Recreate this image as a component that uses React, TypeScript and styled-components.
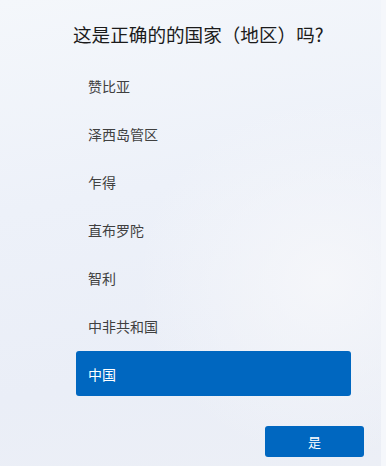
import React from "react";
import styled, { createGlobalStyle } from "styled-components";

const Global = createGlobalStyle`
  html, body { margin: 0; padding: 0; }
  body {
    width: 386px;
    height: 466px;
    overflow: hidden;
    font-family: "Noto Sans CJK SC", "Noto Sans", sans-serif;
  }
`;

const Page = styled.div`
  display: flex;
  width: 386px;
  height: 466px;
`;

const Content = styled.main`
  flex: 1;
  display: flex;
  flex-direction: column;
  padding: 21px 0 0 73px;
  background:
    radial-gradient(ellipse 70% 55% at 85% 60%, rgba(246, 247, 250, 0.9), rgba(246, 247, 250, 0) 70%),
    linear-gradient(170deg, #f4f7fb 0%, #edf1f9 40%, #eaeef7 75%, #eceff6 100%);
`;

const Gutter = styled.div`
  width: 5px;
  background: #f5f7fb;
`;

const Title = styled.h1`
  margin: 0;
  font-size: 18.6px;
  line-height: 26px;
  font-weight: 400;
  color: #1b1b1b;
  white-space: nowrap;
`;

const List = styled.ul`
  list-style: none;
  margin: 16px 0 0 3px;
  padding: 0;
  width: 275px;
  display: flex;
  flex-direction: column;
  gap: 3px;
`;

const Item = styled.li<{ $selected?: boolean }>`
  height: 45px;
  display: flex;
  align-items: center;
  padding: 1px 12px 0;
  box-sizing: border-box;
  border-radius: 3px;
  font-size: 14px;
  color: ${(p) => (p.$selected ? "#ffffff" : "#404040")};
  background: ${(p) => (p.$selected ? "#0067c0" : "transparent")};
`;

const Footer = styled.div`
  display: flex;
  justify-content: flex-end;
  padding-right: 17px;
  margin-top: 30px;
`;

const PrimaryButton = styled.button`
  width: 99px;
  height: 31px;
  border: none;
  border-radius: 3px;
  background: #0067c0;
  color: #ffffff;
  font-family: "Noto Sans CJK SC", "Noto Sans", sans-serif;
  font-size: 13px;
  padding: 0;
`;

const countries = ["赞比亚", "泽西岛管区", "乍得", "直布罗陀", "智利", "中非共和国", "中国"];

export default function App() {
  return (
    <>
      <Global />
      <Page>
        <Content>
          <Title>这是正确的的国家（地区）吗?</Title>
          <List>
            {countries.map((c) => (
              <Item key={c} $selected={c === "中国"}>
                {c}
              </Item>
            ))}
          </List>
          <Footer>
            <PrimaryButton>是</PrimaryButton>
          </Footer>
        </Content>
        <Gutter />
      </Page>
    </>
  );
}
